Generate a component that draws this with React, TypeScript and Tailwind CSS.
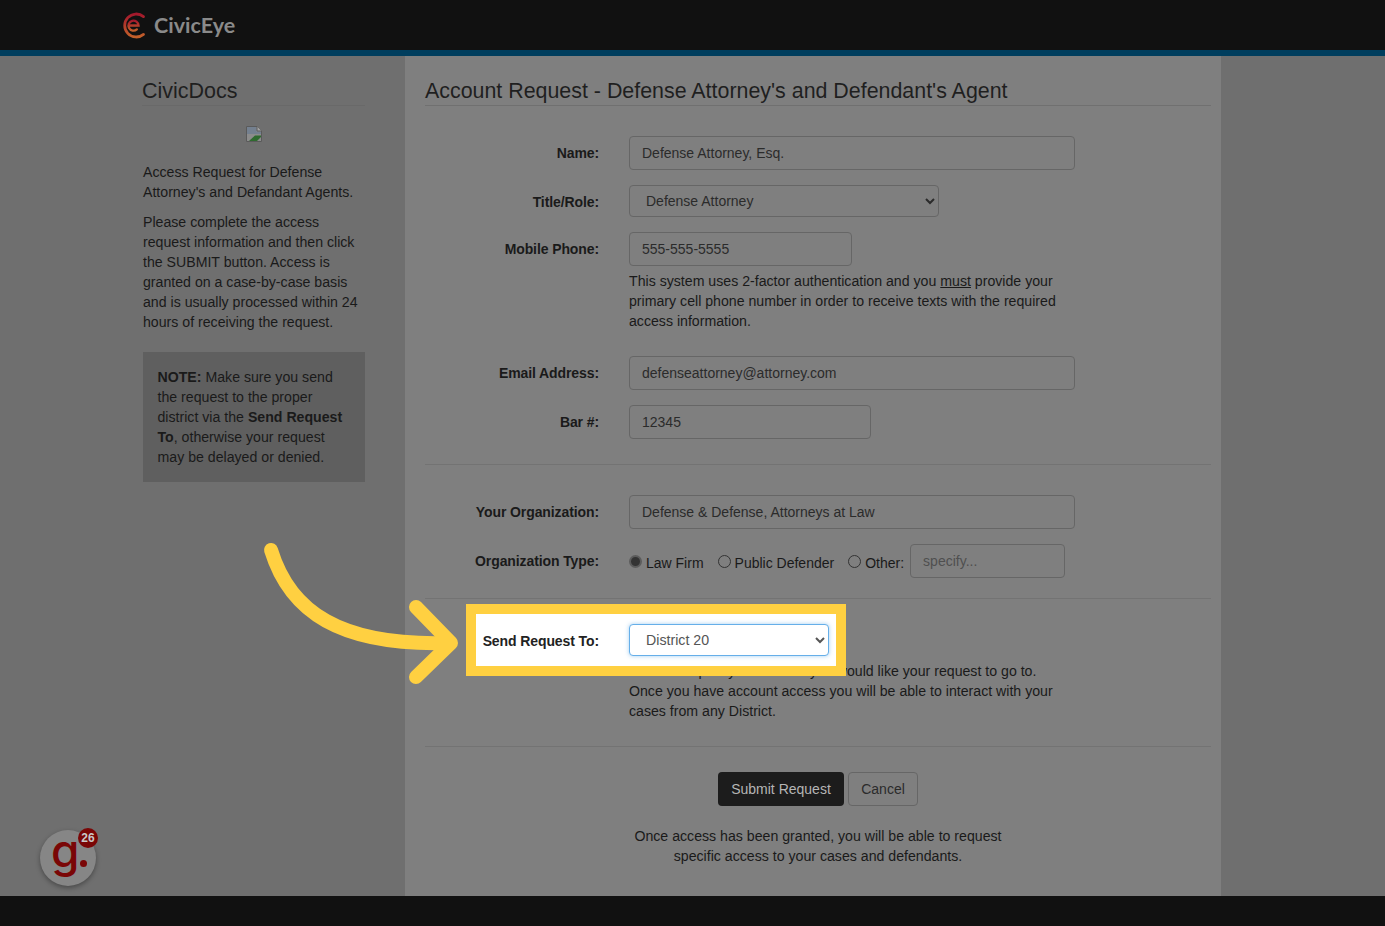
const font = { fontFamily: '"Liberation Sans", Arial, sans-serif' };

const inputCls =
  "h-[34px] rounded-[4px] border border-[#666666] bg-[#7f7f7f] px-3 text-[14px] text-[#2b2b2b] outline-none placeholder:text-[#4f4f4f]";
const selectCls =
  "h-[32px] rounded-[4px] border border-[#666666] bg-[#7f7f7f] pl-3 text-[14px] text-[#2b2b2b] outline-none";

function Row({ label, className, children }: { label: string; className: string; children: React.ReactNode }) {
  return (
    <div className={`flex gap-[30px] ${className}`}>
      <label className="w-[174px] shrink-0 pt-[7px] text-right text-[14px] leading-5 font-bold tracking-[-0.1px] text-[#1a1a1a]">{label}</label>
      <div className="min-w-0 flex-1">{children}</div>
    </div>
  );
}

function Radio({ label, checked }: { label: string; checked?: boolean }) {
  return (
    <span className="flex items-center">
      <span
        className={`mt-[1px] mr-[4px] h-[13px] w-[13px] rounded-full ${
          checked ? "border-2 border-[#5c5c5c] bg-[#333333]" : "border border-[#333333] bg-[#7f7f7f]"
        }`}
      />
      <span className="pt-[4px] text-[14px] leading-5 text-[#1a1a1a]">{label}</span>
    </span>
  );
}

function Logo() {
  return (
    <svg width="25" height="27" viewBox="0 0 25 27" fill="none">
      <defs>
        <linearGradient id="civic" x1="0" y1="0" x2="0" y2="1">
          <stop offset="0" stopColor="#a3182c" />
          <stop offset="1" stopColor="#c2602a" />
        </linearGradient>
      </defs>
      <path d="M22.5 4.6A11.5 11.5 0 1 0 22.5 22.4" stroke="url(#civic)" strokeWidth="2.8" strokeLinecap="round" />
      <path d="M7.5 13.5H17.5A5 5 0 1 0 15.8 17.4" stroke="url(#civic)" strokeWidth="2.4" strokeLinecap="round" />
    </svg>
  );
}

function BrokenImage() {
  return (
    <svg width="16" height="16" viewBox="0 0 16 16">
      <path d="M0.5 0.5H11L15.5 5V15.5H0.5Z" fill="#8c8c8c" stroke="#5a5a5a" />
      <path d="M1 1H10.5V5.5H15V8L1 8Z" fill="#74808f" />
      <path d="M3 15L9 9.5L15 9.5V11L11 15Z" fill="#2f6b2f" />
      <path d="M11 0.5V5H15.5" fill="#a5a5a5" stroke="#5a5a5a" />
    </svg>
  );
}

export default function App() {
  return (
    <div className="relative flex h-[926px] flex-col overflow-hidden bg-[#6f6f6f]" style={font}>
      <header className="h-[56px] shrink-0 border-b-[6px] border-[#003e5e] bg-[#111111] pl-[121px]">
        <div className="flex h-[50px] items-center gap-[8px]">
          <Logo />
          <span className="text-[21.5px] font-bold text-[#8a8a8a]" style={{ fontFamily: "Lato, sans-serif" }}>
            CivicEye
          </span>
        </div>
      </header>

      <div className="flex min-h-0 flex-1">
        <aside className="w-[405px] shrink-0 pt-5 pr-10 pl-[143px]">
          <h3 className="-ml-[1px] border-b border-[#696969] pt-[2px] text-[21.5px] leading-[27px] text-[#1f1f1f]">CivicDocs</h3>
          <div className="mt-5 flex justify-center">
            <BrokenImage />
          </div>
          <p className="mt-5 text-[14.15px] leading-5 text-[#1a1a1a]">
            Access Request for Defense Attorney's and Defandant Agents.
          </p>
          <p className="mt-[10px] text-[14.15px] leading-5 text-[#1a1a1a]">
            Please complete the access request information and then click the SUBMIT button. Access is granted on a
            case-by-case basis and is usually processed within 24 hours of receiving the request.
          </p>
          <div className="mt-5 h-[130px] bg-[#5f5f5f] pt-[15px] pr-[10px] pl-[14.5px] text-[14.15px] leading-5 text-[#1a1a1a]">
            <b>NOTE:</b> Make sure you send the request to the proper district via the <b>Send Request To</b>, otherwise
            your request may be delayed or denied.
          </div>
        </aside>

        <main className="w-[816px] shrink-0 bg-[#7f7f7f] pt-5 pr-[10px] pl-5">
          <h2 className="border-b border-[#707070] pt-[2px] text-[21.4px] leading-[27px] text-[#1f1f1f]">
            Account Request - Defense Attorney's and Defendant's Agent
          </h2>

          <Row label="Name:" className="mt-[30px]">
            <input readOnly value="Defense Attorney, Esq." className={`${inputCls} w-[446px]`} />
          </Row>
          <Row label="Title/Role:" className="mt-[15px]">
            <select className={`${selectCls} w-[310px]`} defaultValue="Defense Attorney">
              <option>Defense Attorney</option>
            </select>
          </Row>
          <Row label="Mobile Phone:" className="mt-[15px]">
            <input readOnly value="555-555-5555" className={`${inputCls} w-[223px]`} />
            <p className="mt-[5px] w-[446px] text-[14.15px] leading-5 text-[#1a1a1a]">
              This system uses 2-factor authentication and you <u>must</u> provide your primary cell phone number in
              order to receive texts with the required access information.
            </p>
          </Row>
          <Row label="Email Address:" className="mt-[25px]">
            <input readOnly value="defenseattorney@attorney.com" className={`${inputCls} w-[446px]`} />
          </Row>
          <Row label="Bar #:" className="mt-[15px]">
            <input readOnly value="12345" className={`${inputCls} w-[242px]`} />
          </Row>

          <hr className="mt-[25px] border-[#737373]" />

          <Row label="Your Organization:" className="mt-[30px]">
            <input readOnly value="Defense & Defense, Attorneys at Law" className={`${inputCls} w-[446px]`} />
          </Row>
          <Row label="Organization Type:" className="mt-[15px]">
            <div className="flex h-[34px] items-center">
              <Radio label="Law Firm" checked />
              <span className="w-[14px]" />
              <Radio label="Public Defender" />
              <span className="w-[14px]" />
              <Radio label="Other:" />
              <input readOnly placeholder="specify..." className={`${inputCls} ml-[6px] w-[155px]`} />
            </div>
          </Row>

          <hr className="mt-[20px] border-[#737373]" />

          <Row label="Send Request To:" className="mt-[25px]">
            <div className="h-[32px]" />
            <p className="mt-[5px] w-[446px] text-[14.15px] leading-5 text-[#1a1a1a]">
              You must specify the District you would like your request to go to.
              <br />
              Once you have account access you will be able to interact with your cases from any District.
            </p>
          </Row>

          <hr className="mt-[25px] border-[#737373]" />

          <div className="mt-[25px] flex justify-center gap-1">
            <button className="h-[34px] w-[126px] rounded-[4px] bg-[#1c1c1c] text-[14px] text-[#b5b5b5]">Submit Request</button>
            <button className="h-[34px] w-[70px] rounded-[4px] border border-[#666666] text-[14px] text-[#2b2b2b]">Cancel</button>
          </div>
          <p className="mt-5 text-center text-[14.15px] leading-5 text-[#1a1a1a]">
            Once access has been granted, you will be able to request
            <br />
            specific access to your cases and defendants.
          </p>
        </main>
      </div>

      <footer className="h-[30px] shrink-0 bg-[#111111]" />

      {/* highlight callout sits over the dimmed form */}
      <div className="absolute top-[604px] left-[466px] flex h-[72px] w-[380px] items-center border-[10px] border-[#ffd041] bg-white">
        <span className="w-[123px] pt-[2px] text-right text-[14px] font-bold tracking-[-0.1px] text-[#222222]">Send Request To:</span>
        <select
          className="ml-[30px] h-[32px] w-[200px] rounded-[4px] border border-[#66afe9] bg-white pl-3 text-[14.2px] text-[#555555] shadow-[0_0_4px_rgba(102,175,233,0.6)] outline-none"
          defaultValue="District 20"
        >
          <option>District 20</option>
        </select>
      </div>

      <svg className="absolute top-[540px] left-[255px]" width="210" height="150" viewBox="255 540 210 150" fill="none">
        <path d="M271 550C290 612 340 646 448 643" stroke="#ffd041" strokeWidth="14" strokeLinecap="round" />
        <path d="M416 607L451 643L416 677" stroke="#ffd041" strokeWidth="14" strokeLinecap="round" strokeLinejoin="round" />
      </svg>

      <div className="absolute top-[830px] left-[40px] h-[56px] w-[56px] rounded-full bg-[#868686] shadow-[0_2px_5px_rgba(0,0,0,0.35)]">
        <span className="absolute -top-[3px] left-[11px] text-[46px] leading-none font-medium text-[#7a0606]" style={{ fontFamily: "Inter, sans-serif" }}>
          g
        </span>
        <span className="absolute top-[30px] left-[40px] h-[7px] w-[7px] rounded-full bg-[#7a0606]" />
        <span className="absolute -top-[2px] left-[38px] flex h-5 w-5 items-center justify-center rounded-full bg-[#7a0606] text-[12px] font-bold text-[#c9c9c9]">
          26
        </span>
      </div>
    </div>
  );
}
